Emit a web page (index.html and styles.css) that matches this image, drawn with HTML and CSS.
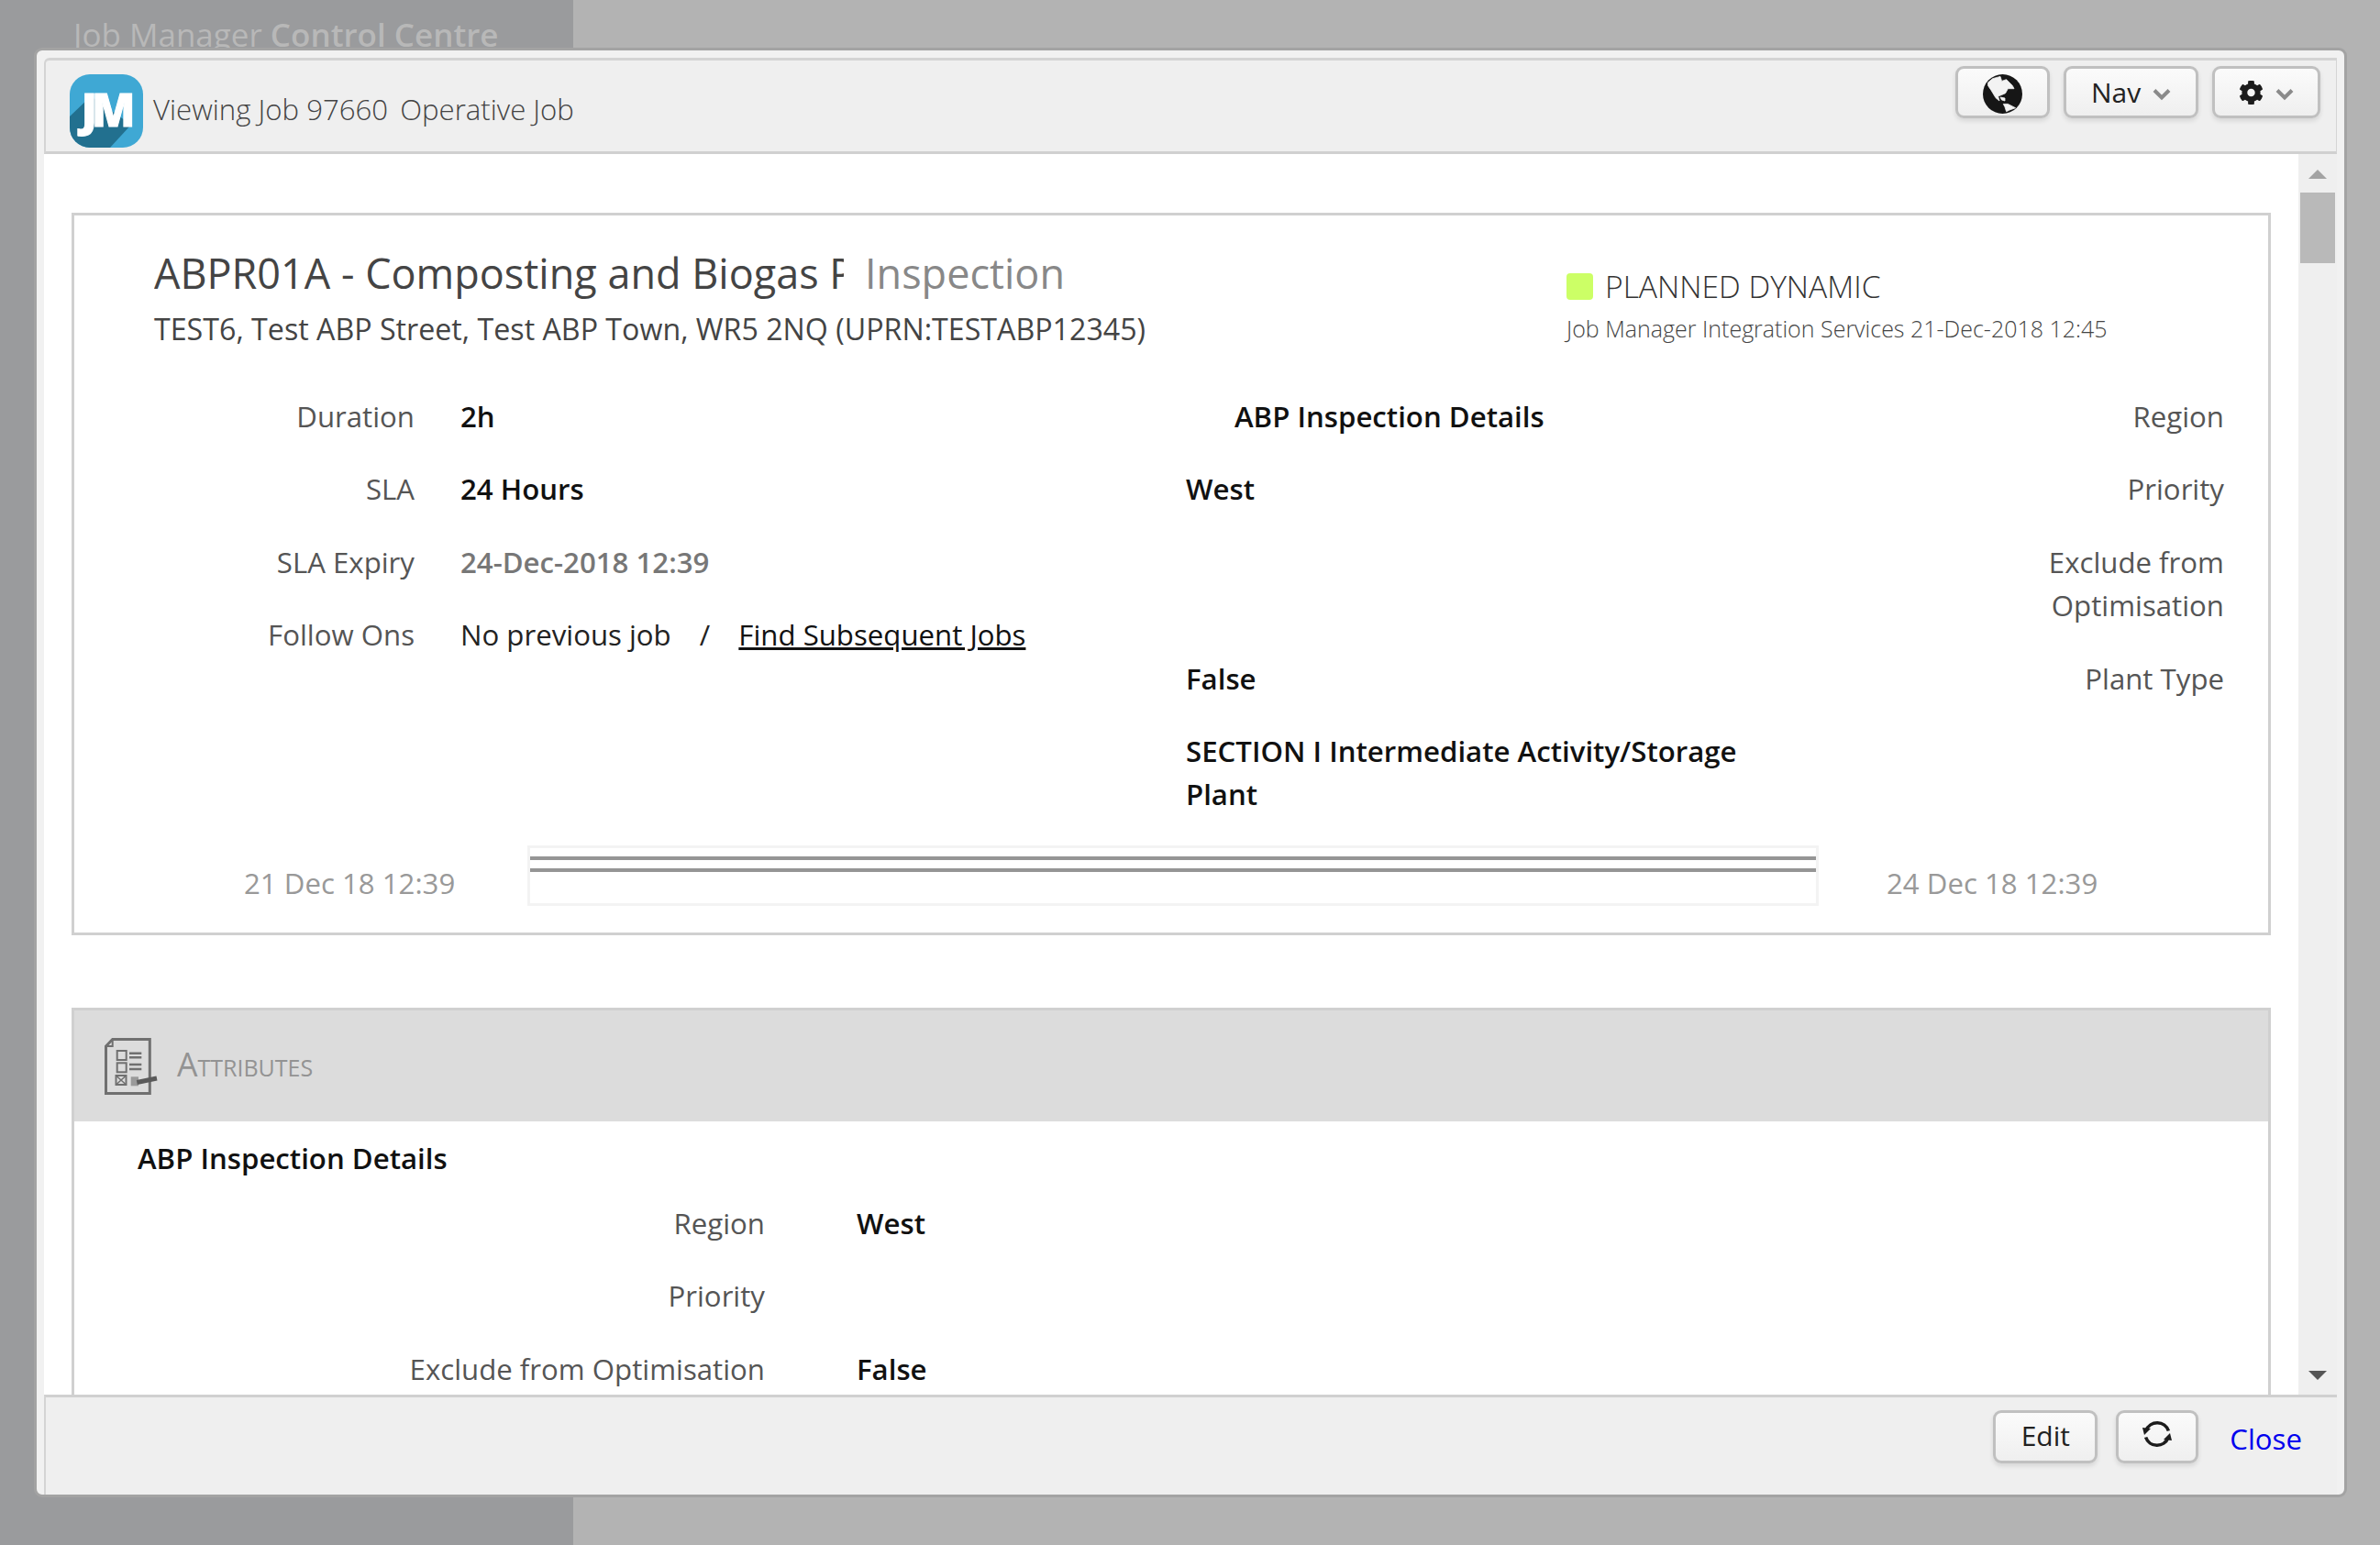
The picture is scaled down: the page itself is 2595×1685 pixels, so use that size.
FILE: index.html
```html
<!DOCTYPE html>
<html lang="en">
<head>
    <meta charset="UTF-8">
    <title>Job Manager Control Centre</title>
    <link rel="stylesheet" href="styles.css">
</head>
<body>
    <div class="page">
        <div class="sidebar"><span class="brand-light">Job Manager</span> <span class="brand-bold">Control Centre</span></div>
        <div class="main-bg"></div>
    </div>

    <div class="dialog">
        <!-- Header -->
        <div class="dialog-header">
            <svg class="logo" viewBox="0 0 80 80">
                <defs><clipPath id="logoClip"><rect width="80" height="80" rx="22"/></clipPath></defs>
                <g clip-path="url(#logoClip)">
                    <rect width="80" height="80" fill="#3fa8d4"/>
                    <path d="M0 46 L23 24 L67 55 L44 80 L0 80 Z" fill="#22708f"/>
                    <text x="39" y="57" class="logo-text" text-anchor="middle">JM</text>
                </g>
            </svg>
            <div class="dialog-title">Viewing Job 97660<span class="title-sub">Operative Job</span></div>
            <div class="header-buttons">
                <button class="btn btn-globe" type="button">
                    <svg class="globe" width="43" height="43" viewBox="0 0 43 43">
                        <circle cx="21.5" cy="21.5" r="21.5" fill="#161616"/>
                        <g fill="#f3f3f3" stroke="#f3f3f3" stroke-width="0.8">
                            <path d="M5.6 9 L10.6 4.7 L19 2.4 L20.6 7.4 L25.6 5.7 L32.3 12.4 L34 15.7 L27.3 15.7 L24.6 20.7 L20.6 22.4 L16.6 24 L18 29 L14 25.7 L9 17.4 L5.6 12.4 Z"/>
                            <path d="M19 25 L24 26 L24 29 L20.5 28 Z"/>
                            <path d="M22.3 32.4 L27.3 32.4 L35.6 36.7 L29 39 L25.6 40.7 L24 35.7 Z"/>
                        </g>
                    </svg>
                </button>
                <button class="btn btn-nav" type="button">Nav
                    <svg class="chevron" width="20" height="14" viewBox="0 0 20 14"><path d="M2 2.5 L10 10.5 L18 2.5" fill="none" stroke="#8a8a8a" stroke-width="4"/></svg>
                </button>
                <button class="btn btn-cog" type="button">
                    <svg width="27" height="28" viewBox="0 0 512 512"><path fill="#1c1c1c" d="M487.4 315.7l-42.6-24.6c4.3-23.2 4.3-47 0-70.2l42.6-24.6c4.9-2.8 7.1-8.6 5.5-14-11.1-35.6-30-67.8-54.7-94.6-3.8-4.1-10-5.1-14.8-2.3L380.8 110c-17.9-15.4-38.5-27.3-60.8-35.1V25.8c0-5.6-3.9-10.5-9.4-11.7-36.7-8.2-74.3-7.8-109.2 0-5.5 1.2-9.4 6.1-9.4 11.7V75c-22.2 7.9-42.8 19.8-60.8 35.1L88.7 85.5c-4.9-2.8-11-1.9-14.8 2.3-24.7 26.7-43.6 58.9-54.7 94.6-1.7 5.4.6 11.2 5.5 14L67.3 221c-4.3 23.2-4.3 47 0 70.2l-42.6 24.6c-4.9 2.8-7.1 8.6-5.5 14 11.1 35.6 30 67.8 54.7 94.6 3.8 4.1 10 5.1 14.8 2.3l42.6-24.6c17.9 15.4 38.5 27.3 60.8 35.1v49.2c0 5.6 3.9 10.5 9.4 11.7 36.7 8.2 74.3 7.8 109.2 0 5.5-1.2 9.4-6.1 9.4-11.7v-49.2c22.2-7.9 42.8-19.8 60.8-35.1l42.6 24.6c4.9 2.8 11 1.9 14.8-2.3 24.7-26.7 43.6-58.9 54.7-94.6 1.5-5.5-.7-11.3-5.6-14.1zM256 336c-44.1 0-80-35.9-80-80s35.9-80 80-80 80 35.9 80 80-35.9 80-80 80z"/></svg>
                    <svg class="chevron" width="20" height="14" viewBox="0 0 20 14"><path d="M2 2.5 L10 10.5 L18 2.5" fill="none" stroke="#8a8a8a" stroke-width="4"/></svg>
                </button>
            </div>
        </div>

        <!-- Scrolling area -->
        <div class="dialog-middle">
            <div class="dialog-body">
                <div class="summary">
                    <div class="summary-top">
                        <div class="summary-heading">
                            <div class="title-row">
                                <span class="title-name">ABPR01A - Composting and Biogas Plant</span>
                                <span class="title-type">Inspection</span>
                            </div>
                            <div class="address">TEST6, Test ABP Street, Test ABP Town, WR5 2NQ (UPRN:TESTABP12345)</div>
                        </div>
                        <div class="status">
                            <div class="status-name"><span class="swatch"></span>PLANNED DYNAMIC</div>
                            <div class="status-by">Job Manager Integration Services 21-Dec-2018 12:45</div>
                        </div>
                    </div>

                    <div class="details">
                        <div class="details-left">
                            <div class="label">Duration</div><div class="value">2h</div>
                            <div class="label">SLA</div><div class="value">24 Hours</div>
                            <div class="label">SLA Expiry</div><div class="value value-grey">24-Dec-2018 12:39</div>
                            <div class="label">Follow Ons</div>
                            <div class="value-plain">No previous job <span class="slash">/</span> <a href="#" class="find-link">Find Subsequent Jobs</a></div>
                        </div>
                        <div class="details-right">
                            <div class="value value-heading">ABP Inspection Details</div><div class="label">Region</div>
                            <div class="value">West</div><div class="label">Priority</div>
                            <div class="value"></div><div class="label">Exclude from Optimisation</div>
                            <div class="value">False</div><div class="label">Plant Type</div>
                            <div class="value">SECTION I Intermediate Activity/Storage Plant</div><div class="label"></div>
                        </div>
                    </div>

                    <div class="timeline">
                        <div class="timeline-date">21 Dec 18 12:39</div>
                        <div class="timeline-bar"><div class="timeline-line"></div><div class="timeline-line"></div></div>
                        <div class="timeline-date">24 Dec 18 12:39</div>
                    </div>
                </div>

                <div class="attributes">
                    <div class="attributes-head">
                        <svg class="attributes-icon" width="60" height="62" viewBox="0 0 60 62" fill="none" stroke="#707070">
                            <path d="M8.7 1.5 H49.3 V60.5 H1.5 V9 Z" stroke-width="3"/>
                            <path d="M1.5 9 H8.7 V2" stroke-width="2"/>
                            <rect x="13.7" y="14" width="10" height="10" stroke-width="2"/>
                            <rect x="13.7" y="27.3" width="10" height="10" stroke-width="2"/>
                            <rect x="12.5" y="41" width="11" height="10" stroke-width="2"/>
                            <path d="M12.5 41 L23.5 51 M23.5 41 L12.5 51" stroke-width="1.6"/>
                            <path d="M27 16.7 H40.3 M27 21.3 H40.3 M27 29 H40.3 M27 34 H40.3" stroke-width="2.4"/>
                            <rect x="28.7" y="42.3" width="8.3" height="10" fill="#9a9a9a" stroke="none"/>
                            <path d="M35.3 48.5 L57 44" stroke="#5a5a5a" stroke-width="5"/>
                        </svg>
                        <span class="attributes-title">Attributes</span>
                    </div>
                    <div class="attributes-body">
                        <div class="group-title">ABP Inspection Details</div>
                        <div class="attr-grid">
                            <div class="label">Region</div><div class="value">West</div>
                            <div class="label">Priority</div><div class="value"></div>
                            <div class="label">Exclude from Optimisation</div><div class="value">False</div>
                        </div>
                    </div>
                </div>
            </div>

            <div class="scrollbar">
                <span class="arrow-up"></span>
                <div class="scroll-track"><div class="scroll-thumb"></div></div>
                <span class="arrow-down"></span>
            </div>
        </div>

        <!-- Footer -->
        <div class="dialog-footer">
            <button class="btn btn-edit" type="button">Edit</button>
            <button class="btn btn-refresh" type="button">
                <svg width="32" height="32" viewBox="0 0 32 32" fill="none" stroke="#1c1c1c" stroke-width="3.6">
                    <path d="M4 12 A13 13 0 0 1 28.4 12.5"/>
                    <path d="M28 20 A13 13 0 0 1 3.6 19.5"/>
                    <path d="M0 9 L9 10 L2 17 Z" fill="#1c1c1c" stroke="none"/>
                    <path d="M32 23 L23 22 L30 15 Z" fill="#1c1c1c" stroke="none"/>
                </svg>
            </button>
            <a href="#" class="close-link">Close</a>
        </div>
    </div>
</body>
</html>
```

FILE: styles.css
```css
* {
    box-sizing: border-box;
}
html, body {
    margin: 0;
    height: 100%;
    overflow: hidden;
}
body {
    font-family: "Open Sans", sans-serif;
    font-size: 31.2px;
    color: #555;
    background-color: #b3b3b3;
}
.page {
    display: flex;
    height: 1685px;
}
.sidebar {
    width: 625px;
    background-color: #9a9b9d;
    padding: 14px 0 0 80px;
    font-size: 35px;
    color: #b8b8b8;
}
.brand-light {
    font-weight: 400;
}
.brand-bold {
    font-weight: 600;
}
.main-bg {
    flex: 1;
}

/* dialog window floats over the page */
.dialog {
    position: absolute;
    left: 37px;
    top: 52px;
    width: 2522px;
    height: 1581px;
    border: 3px solid #a3a3a3;
    border-radius: 9px;
    background-color: #f1f1f1;
    padding: 8px 8px 0 8px;
    display: flex;
    flex-direction: column;
}
.dialog-header {
    height: 105px;
    flex: none;
    display: flex;
    align-items: flex-start;
    background-color: #efefef;
    border-top: 3px solid #d4d4d4;
    border-bottom: 3px solid #d0d0d0;
    border-left: 2px solid #d4d4d4;
    border-right: 1px solid #d4d4d4;
    border-top-left-radius: 6px;
    padding-left: 26px;
}
.logo {
    width: 80px;
    height: 80px;
    margin-top: 15px;
    flex: none;
}
.logo-text {
    font-family: "Open Sans", sans-serif;
    font-weight: 800;
    font-size: 49px;
    letter-spacing: -6px;
    fill: #fff;
    stroke: #fff;
    stroke-width: 1px;
}
.dialog-title {
    font-weight: 300;
    font-size: 31.2px;
    color: #444;
    margin: 32px 0 0 11px;
    white-space: nowrap;
}
.title-sub {
    margin-left: 13px;
}
.header-buttons {
    margin-left: auto;
    display: flex;
    gap: 15px;
    padding: 6px 17px 0 0;
}
.btn {
    font-family: "Open Sans", sans-serif;
    font-size: 30px;
    font-weight: 400;
    color: #222;
    height: 57px;
    padding: 0;
    border: 3px solid #c0c0c0;
    border-radius: 9px;
    background: linear-gradient(#fbfbfb, #efefef);
    box-shadow: 0 3px 5px rgba(0, 0, 0, 0.1);
    display: flex;
    align-items: center;
    justify-content: center;
}
.btn-globe {
    width: 103px;
}
.globe {
    margin-top: 3px;
}
.btn-nav {
    width: 147px;
    gap: 13px;
}
.btn-cog {
    width: 118px;
    gap: 13px;
}
.chevron {
    margin-top: 4px;
}

/* body + scrollbar */
.dialog-middle {
    flex: 1;
    min-height: 0;
    display: flex;
}
.dialog-body {
    flex: 1;
    min-width: 0;
    background-color: #fff;
    overflow: hidden;
    padding: 64px 30px 0 30px;
}
.scrollbar {
    width: 42px;
    flex: none;
    display: flex;
    flex-direction: column;
    align-items: center;
    background-color: #efefef;
}
.arrow-up {
    margin-top: 17px;
    border-left: 10px solid transparent;
    border-right: 10px solid transparent;
    border-bottom: 10px solid #a3a3a3;
}
.arrow-down {
    margin-bottom: 16px;
    border-left: 10px solid transparent;
    border-right: 10px solid transparent;
    border-top: 10px solid #555;
}
.scroll-track {
    flex: 1;
    width: 38px;
    padding-top: 15px;
}
.scroll-thumb {
    height: 77px;
    background-color: #b9b9b9;
}

/* summary box */
.summary {
    height: 788px;
    border: 3px solid #d0d0d0;
    padding: 32px 0 0 0;
}
.summary-top {
    display: flex;
    padding-left: 87px;
    height: 148px;
}
.summary-heading {
    width: 1540px;
    flex: none;
}
.title-row {
    display: flex;
    gap: 23px;
    font-size: 45px;
    line-height: 62px;
    white-space: nowrap;
}
.title-name {
    width: 752px;
    overflow: hidden;
    color: #444;
}
.title-type {
    color: #888;
}
.address {
    font-size: 32.2px;
    line-height: 44px;
    margin-top: 8px;
    color: #444;
    white-space: nowrap;
}
.status-name {
    display: flex;
    align-items: center;
    font-weight: 300;
    font-size: 33.6px;
    color: #333;
    margin-top: 23px;
    line-height: 44px;
}
.swatch {
    width: 29px;
    height: 29px;
    border-radius: 4px;
    background-color: #ccff66;
    margin-right: 13px;
}
.status-by {
    font-weight: 300;
    font-size: 25px;
    line-height: 44px;
    margin-top: 2px;
    color: #444;
    white-space: nowrap;
}
.details {
    display: flex;
    height: 507px;
}
.details-left {
    width: 1212px;
    flex: none;
    display: grid;
    grid-template-columns: 371px 1fr;
    column-gap: 50px;
    align-content: start;
}
.details-right {
    width: 1132px;
    flex: none;
    display: grid;
    grid-template-columns: 640px 1fr;
    align-content: start;
}
.details-right .label {
    padding-left: 200px;
}
.label {
    text-align: right;
    line-height: 47.4px;
    padding: 16px 0;
    color: #555;
}
.value {
    font-weight: 600;
    color: #111;
    line-height: 47.4px;
    padding: 16px 0;
}
.value-grey {
    color: #777;
}
.value-heading {
    padding-left: 53px;
}
.value-plain {
    color: #222;
    line-height: 47.4px;
    padding: 16px 0;
    white-space: nowrap;
}
.slash {
    margin: 0 23px;
}
.find-link {
    color: #111;
}
.timeline {
    display: flex;
    align-items: flex-start;
    padding-left: 185px;
}
.timeline-date {
    color: #999;
    width: 309px;
    flex: none;
    line-height: 48px;
    padding-top: 17px;
}
.timeline-bar {
    width: 1408px;
    height: 66px;
    flex: none;
    border: 3px solid #f3f3f3;
    padding-top: 9px;
    margin-right: 74px;
}
.timeline-line {
    height: 4px;
    background-color: #959595;
    margin-bottom: 9px;
}

/* attributes section */
.attributes {
    margin-top: 79px;
    border: 3px solid #d0d0d0;
    border-bottom: none;
}
.attributes-head {
    height: 121px;
    background-color: #dcdcdc;
    display: flex;
    align-items: center;
    padding-left: 33px;
}
.attributes-icon {
    flex: none;
}
.attributes-title {
    font-variant: small-caps;
    font-size: 35.6px;
    color: #939393;
    margin-left: 19px;
    margin-top: -6px;
}
.attributes-body {
    padding: 16px 0 0 69px;
}
.group-title {
    font-weight: 600;
    color: #111;
    line-height: 48px;
}
.attr-grid {
    display: grid;
    grid-template-columns: 684px 1fr;
    column-gap: 100px;
    margin-top: 8px;
}

.dialog-footer {
    height: 109px;
    flex: none;
    background-color: #efefef;
    border-top: 3px solid #d0d0d0;
    border-left: 2px solid #d4d4d4;
    display: flex;
    align-items: flex-start;
    justify-content: flex-end;
    gap: 20px;
    padding: 14px 38px 0 0;
}
.btn-edit {
    width: 114px;
    height: 58px;
    padding-bottom: 3px;
}
.btn-refresh {
    width: 90px;
    height: 58px;
    padding-bottom: 6px;
}
.close-link {
    color: #0000ee;
    text-decoration: none;
    font-size: 31.2px;
    margin-left: 14px;
    line-height: 48px;
    padding-top: 7px;
}
```
